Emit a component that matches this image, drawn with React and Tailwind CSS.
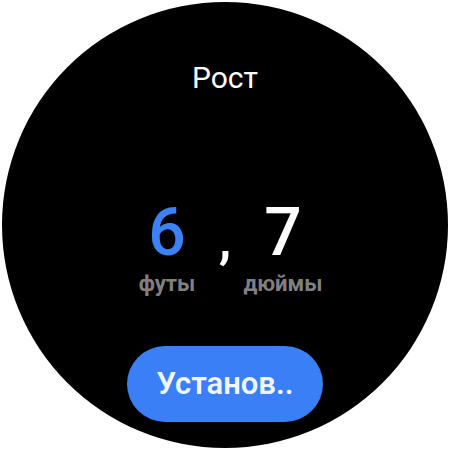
const App = () => {
  return (
    <div className="w-[450px] h-[450px] bg-white flex items-center justify-center" style={{ fontFamily: "Roboto, 'Noto Sans', sans-serif" }}>
      <div className="w-[446px] h-[446px] rounded-full bg-black flex flex-col items-center">
        {/* Title */}
        <h1 className="mt-[56px] text-[30px] leading-[40px] text-white font-normal">Рост</h1>

        {/* Height picker */}
        <div className="mt-[102px] grid grid-cols-[100px_16px_100px] items-end">
          <span className="text-center text-[66px] leading-[66px] font-medium text-[#3b82f6]">6</span>
          <span className="text-center text-[56px] leading-[56px] font-medium text-white">,</span>
          <span className="text-center text-[66px] leading-[66px] font-medium text-white">7</span>
          <span className="text-center text-[22px] leading-[28px] font-bold text-[#808080] mt-[4px]">футы</span>
          <span></span>
          <span className="text-center text-[22px] leading-[28px] font-bold text-[#808080] mt-[4px]">дюймы</span>
        </div>

        {/* Confirm button */}
        <button className="mt-[48px] w-[196px] h-[76px] rounded-full bg-[#3a7ff6] text-[#f0f6ff] text-[31px] font-semibold">
          Установ..
        </button>
      </div>
    </div>
  );
};

export default App;
